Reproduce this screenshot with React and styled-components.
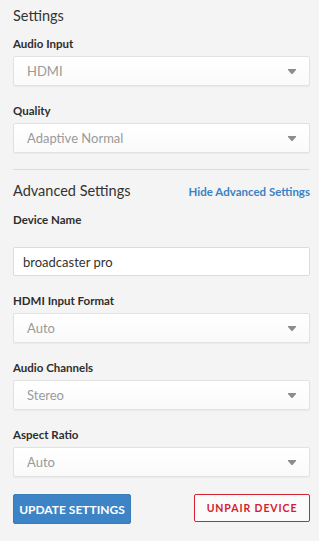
import React, { useState } from 'react';
import styled, { createGlobalStyle } from 'styled-components';

const GlobalStyle = createGlobalStyle`
    html, body {
        margin: 0;
        padding: 0;
        background: #f4f4f4;
    }
    body {
        font-family: Lato, 'Open Sans', sans-serif;
        color: #333;
    }
`;

const Panel = styled.div`
    width: 319px;
    box-sizing: border-box;
    padding: 6px 9px 14px 13px;
    background: #f4f4f4;
`;

const Title = styled.h2`
    margin: 0 0 10px;
    font-size: 14.5px;
    line-height: 20px;
    font-weight: 400;
    color: #333;
`;

const SectionHead = styled.div`
    display: flex;
    align-items: center;
    justify-content: space-between;
    height: 20px;
    margin: 11px 0 11px;
`;

const SectionTitle = styled(Title)`
    margin: 0;
`;

const Link = styled.a`
    font-size: 11.5px;
    font-weight: 700;
    color: #3a82c4;
    cursor: pointer;
    text-decoration: none;
`;

const Divider = styled.hr`
    margin: 16px 0 0;
    border: none;
    border-top: 1px solid #dcdcdc;
`;

const Field = styled.div`
    display: flex;
    flex-direction: column;
    gap: ${(p) => (p.$wide ? '19px' : '4px')};
    & + & {
        margin-top: ${(p) => (p.$after ? '17px' : '18px')};
    }
`;

const Label = styled.label`
    font-size: 11.5px;
    line-height: 16px;
    font-weight: 700;
    color: #2e2e2e;
`;

const SelectBox = styled.div`
    display: flex;
    align-items: center;
    justify-content: space-between;
    height: 30px;
    box-sizing: border-box;
    padding: 0 13px 0 13px;
    background: linear-gradient(#ffffff, #fafafa);
    border: 1px solid #e2e2e2;
    border-radius: 2px;
    box-shadow: 0 1px 1px rgba(0, 0, 0, 0.04);
    font-size: 13px;
    color: #9a9a9a;
    cursor: pointer;
`;

const Input = styled.input`
    height: 29px;
    box-sizing: border-box;
    padding: 0 9px;
    background: #fff;
    border: 1px solid #dcdcdc;
    border-radius: 2px;
    font-family: inherit;
    font-size: 13px;
    color: #333;
    outline: none;
`;

const Caret = () => (
    <svg width="8" height="5" viewBox="0 0 8 5">
        <path d="M0 0 H8 V1 L4.5 5 H3.5 L0 1 Z" fill="#8c8c8c" />
    </svg>
);

const Select = ({ value }) => (
    <SelectBox>
        <span>{value}</span>
        <Caret />
    </SelectBox>
);

const Actions = styled.div`
    display: flex;
    justify-content: space-between;
    align-items: flex-start;
    margin-top: 17px;
`;

const Button = styled.button`
    height: ${(p) => (p.$outline ? '28px' : '30px')};
    width: ${(p) => (p.$outline ? '116px' : '118px')};
    box-sizing: border-box;
    padding: 0;
    border-radius: 2px;
    font-family: inherit;
    font-size: ${(p) => (p.$outline ? '10.5px' : '12px')};
    font-weight: 700;
    letter-spacing: ${(p) => (p.$outline ? '0.9px' : '0')};
    cursor: pointer;
    border: ${(p) => (p.$outline ? '1px solid #d2222f' : '1px solid #3a7cba')};
    background: ${(p) => (p.$outline ? '#fbfbfb' : '#3d84c6')};
    color: ${(p) => (p.$outline ? '#d2222f' : '#ffffff')};
`;

export default function App() {
    const [name, setName] = useState('broadcaster pro');

    return (
        <Panel>
            <GlobalStyle />
            <Title>Settings</Title>
            <Field>
                <Label>Audio Input</Label>
                <Select value="HDMI" />
            </Field>
            <Field>
                <Label>Quality</Label>
                <Select value="Adaptive Normal" />
            </Field>
            <Divider />
            <SectionHead>
                <SectionTitle>Advanced Settings</SectionTitle>
                <Link>Hide Advanced Settings</Link>
            </SectionHead>
            <Field $wide>
                <Label>Device Name</Label>
                <Input value={name} onChange={(e) => setName(e.target.value)} />
            </Field>
            <Field $after>
                <Label>HDMI Input Format</Label>
                <Select value="Auto" />
            </Field>
            <Field>
                <Label>Audio Channels</Label>
                <Select value="Stereo" />
            </Field>
            <Field>
                <Label>Aspect Ratio</Label>
                <Select value="Auto" />
            </Field>
            <Actions>
                <Button>UPDATE SETTINGS</Button>
                <Button $outline>UNPAIR DEVICE</Button>
            </Actions>
        </Panel>
    );
}
